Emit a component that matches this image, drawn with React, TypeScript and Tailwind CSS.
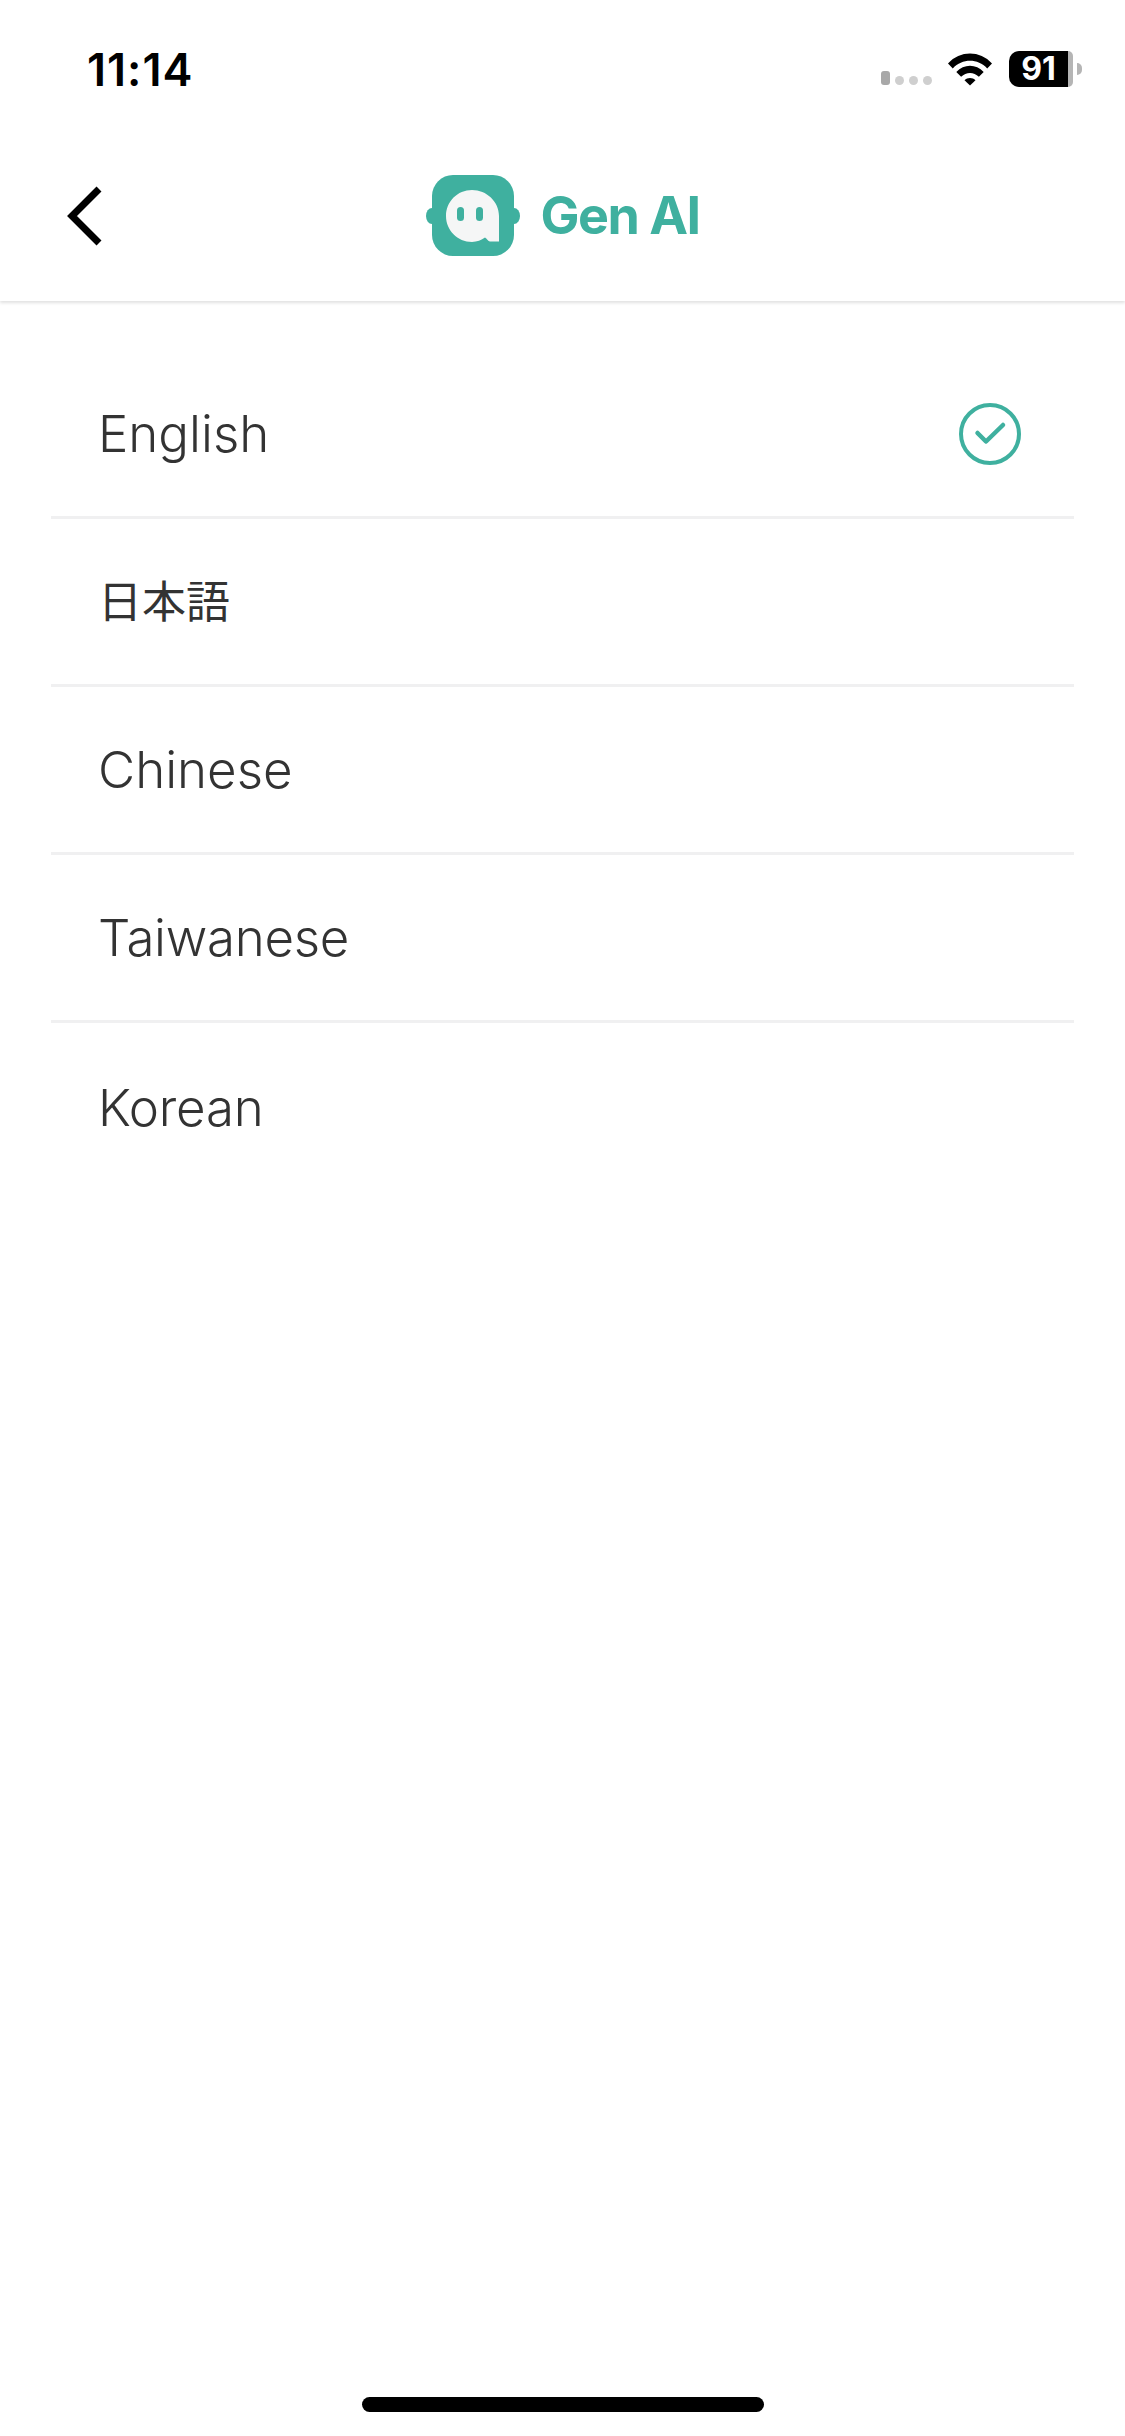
function Logo() {
  return (
    <svg width="96" height="82" viewBox="0 0 96 82" aria-hidden="true">
      <ellipse cx="7" cy="41" rx="6" ry="8" fill="#3fb09f" />
      <ellipse cx="89" cy="41" rx="6" ry="8" fill="#3fb09f" />
      <rect x="7" y="0" width="82" height="81" rx="21" fill="#3fb09f" />
      <path
        d="M47 15C61.5 15 74 26.5 74 41V66.5H65C63 66.5 61.8 63.6 60 62.6C56.4 65.4 52 67 47 67C32.5 67 21 55.3 21 41C21 26.5 32.5 15 47 15Z"
        fill="#f5f6f6"
      />
      <rect x="32" y="32" width="7" height="14" rx="3.5" fill="#3fb09f" />
      <rect x="51" y="32" width="7" height="14" rx="3.5" fill="#3fb09f" />
    </svg>
  );
}

function Wifi() {
  return (
    <svg width="46" height="34" viewBox="0 0 46 34" aria-hidden="true">
      <path d="M1 11.5C13 -1.8 33 -1.8 45 11.5L40.2 16.4C30.8 6.2 15.2 6.2 5.8 16.4Z" fill="#000" />
      <path d="M9.3 20C17 11.6 29 11.6 36.7 20L31.9 24.8C26.8 19.6 19.2 19.6 14.1 24.8Z" fill="#000" />
      <path d="M17.5 28.3C20.4 25.1 25.6 25.1 28.5 28.3L23 33.6Z" fill="#000" />
    </svg>
  );
}

function Check() {
  return (
    <svg width="62" height="62" viewBox="0 0 62 62" fill="none" aria-hidden="true">
      <circle cx="31" cy="31" r="29" stroke="#3fb09f" strokeWidth="4" />
      <path d="M18.5 30L27 38.5L44 22" stroke="#3fb09f" strokeWidth="4.5" strokeLinecap="round" strokeLinejoin="round" />
    </svg>
  );
}

const languages = [
  { name: "English", cls: "text-[51px] font-light" },
  { name: "日本語", cls: "text-[44px] font-normal" },
  { name: "Chinese", cls: "text-[51px] font-light" },
  { name: "Taiwanese", cls: "text-[51px] font-light tracking-[-0.3px]" },
  { name: "Korean", cls: "text-[51px] font-light tracking-[-0.2px]" },
];

export default function App() {
  return (
    <div className="flex h-[2436px] w-[1125px] flex-col overflow-hidden bg-white font-['Inter','Noto_Sans_CJK_JP',sans-serif]">
      <header className="h-[301px] shrink-0 bg-white shadow-[0_2px_3px_rgba(0,0,0,0.12)]">
        <div className="flex h-[133px] items-center justify-between pt-[5px] pl-[87px] pr-[43px]">
          <span className="text-[45px] leading-none font-semibold tracking-[1px] text-black">11:14</span>
          <div className="flex items-center">
            <div className="mt-[18px] flex h-[14px] items-end gap-[5px]">
              <span className="h-[14px] w-[9px] rounded-[3px] bg-[#a8a8a8]" />
              <span className="size-[9px] rounded-full bg-[#cfcfcf]" />
              <span className="size-[9px] rounded-full bg-[#cfcfcf]" />
              <span className="size-[9px] rounded-full bg-[#cfcfcf]" />
            </div>
            <div className="ml-[15px] flex">
              <Wifi />
            </div>
            <div className="ml-[16px] flex items-center">
              <div className="flex h-[36px] w-[64px]">
                <div className="flex flex-1 items-center justify-center rounded-l-[10px] bg-black text-[32px] leading-none font-bold text-white">
                  91
                </div>
                <span className="w-[5px] rounded-r-[10px] bg-[#b5b5b5]" />
              </div>
              <span className="ml-[4px] h-[12px] w-[5px] rounded-r-full bg-[#b5b5b5]" />
            </div>
          </div>
        </div>
        <div className="grid h-[166px] grid-cols-[1fr_auto_1fr] items-center">
          <div className="pl-[64px]">
            <svg width="40" height="62" viewBox="0 0 40 62" fill="none" aria-hidden="true">
              <path d="M35 4L8 31L35 58" stroke="#000" strokeWidth="7" />
            </svg>
          </div>
          <div className="flex items-center gap-[19px]">
            <Logo />
            <span className="text-[52px] leading-none font-bold tracking-[-1.5px] text-[#3fb09f]">Gen AI</span>
          </div>
          <div />
        </div>
      </header>

      <ul className="mx-[51px] mt-[50px] flex flex-col">
        {languages.map((lang, i) => (
          <li
            key={lang.name}
            className={`flex h-[168px] items-center justify-between pl-[47px] pr-[53px] ${
              i < languages.length - 1 ? "border-b-[3px] border-[#f0f0f1]" : ""
            }`}
          >
            <span className={`${lang.cls} leading-none text-[#333333]`}>{lang.name}</span>
            {i === 0 && <Check />}
          </li>
        ))}
      </ul>

      <div className="mt-auto flex justify-center pb-[24px]">
        <span className="h-[15px] w-[402px] rounded-full bg-black" />
      </div>
    </div>
  );
}
